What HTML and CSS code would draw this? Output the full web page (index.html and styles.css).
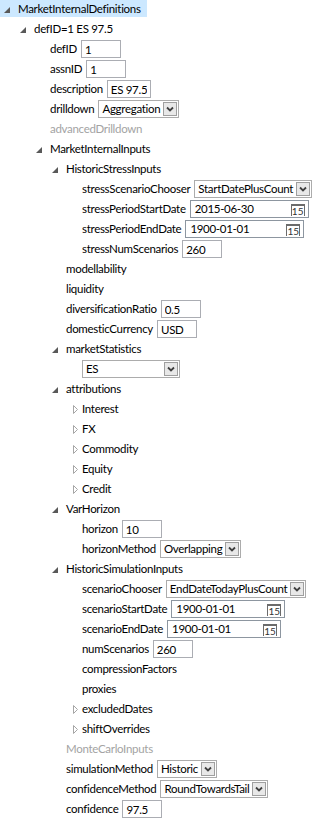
FILE: index.html
```html
<!DOCTYPE html>
<html lang="en">
<head>
    <meta charset="UTF-8">
    <title>MarketInternalDefinitions</title>
    <link rel="stylesheet" href="styles.css">
</head>
<body>
    <ul class="tree">
        <li>
            <div class="row selected">
                <span class="exp open"></span>
                <span class="label">MarketInternalDefinitions</span>
            </div>
            <ul>
                <li>
                    <div class="row"><span class="exp open"></span><span class="label">defID=1 ES 97.5</span></div>
                    <ul>
                        <li><div class="row"><span class="exp"></span><span class="label">defID</span><input class="field" type="text" value="1"></div></li>
                        <li><div class="row"><span class="exp"></span><span class="label">assnID</span><input class="field" type="text" value="1"></div></li>
                        <li><div class="row"><span class="exp"></span><span class="label">description</span><input class="field wide" type="text" value="ES 97.5"></div></li>
                        <li><div class="row"><span class="exp"></span><span class="label">drilldown</span><span class="combo"><span class="combo-text">Aggregation</span><span class="combo-btn"></span></span></div></li>
                        <li><div class="row"><span class="exp"></span><span class="label muted">advancedDrilldown</span></div></li>
                        <li>
                            <div class="row"><span class="exp open"></span><span class="label">MarketInternalInputs</span></div>
                            <ul>
                                <li>
                                    <div class="row"><span class="exp open"></span><span class="label">HistoricStressInputs</span></div>
                                    <ul>
                                        <li><div class="row"><span class="exp"></span><span class="label">stressScenarioChooser</span><span class="combo"><span class="combo-text">StartDatePlusCount</span><span class="combo-btn"></span></span></div></li>
                                        <li><div class="row"><span class="exp"></span><span class="label">stressPeriodStartDate</span><span class="date"><span class="date-text">2015-06-30</span><span class="cal">15</span></span></div></li>
                                        <li><div class="row"><span class="exp"></span><span class="label">stressPeriodEndDate</span><span class="date"><span class="date-text">1900-01-01</span><span class="cal">15</span></span></div></li>
                                        <li><div class="row"><span class="exp"></span><span class="label">stressNumScenarios</span><input class="field" type="text" value="260"></div></li>
                                    </ul>
                                </li>
                                <li><div class="row"><span class="exp"></span><span class="label">modellability</span></div></li>
                                <li><div class="row"><span class="exp"></span><span class="label">liquidity</span></div></li>
                                <li><div class="row"><span class="exp"></span><span class="label">diversificationRatio</span><input class="field" type="text" value="0.5"></div></li>
                                <li><div class="row"><span class="exp"></span><span class="label">domesticCurrency</span><input class="field" type="text" value="USD"></div></li>
                                <li>
                                    <div class="row"><span class="exp open"></span><span class="label">marketStatistics</span></div>
                                    <ul>
                                        <li><div class="row"><span class="exp"></span><span class="combo fixed"><span class="combo-text">ES</span><span class="combo-btn"></span></span></div></li>
                                    </ul>
                                </li>
                                <li>
                                    <div class="row"><span class="exp open"></span><span class="label">attributions</span></div>
                                    <ul>
                                        <li><div class="row"><span class="exp closed"></span><span class="label">Interest</span></div></li>
                                        <li><div class="row"><span class="exp closed"></span><span class="label">FX</span></div></li>
                                        <li><div class="row"><span class="exp closed"></span><span class="label">Commodity</span></div></li>
                                        <li><div class="row"><span class="exp closed"></span><span class="label">Equity</span></div></li>
                                        <li><div class="row"><span class="exp closed"></span><span class="label">Credit</span></div></li>
                                    </ul>
                                </li>
                                <li>
                                    <div class="row"><span class="exp open"></span><span class="label">VarHorizon</span></div>
                                    <ul>
                                        <li><div class="row"><span class="exp"></span><span class="label">horizon</span><input class="field" type="text" value="10"></div></li>
                                        <li><div class="row"><span class="exp"></span><span class="label">horizonMethod</span><span class="combo"><span class="combo-text">Overlapping</span><span class="combo-btn"></span></span></div></li>
                                    </ul>
                                </li>
                                <li>
                                    <div class="row"><span class="exp open"></span><span class="label">HistoricSimulationInputs</span></div>
                                    <ul>
                                        <li><div class="row"><span class="exp"></span><span class="label">scenarioChooser</span><span class="combo"><span class="combo-text">EndDateTodayPlusCount</span><span class="combo-btn"></span></span></div></li>
                                        <li><div class="row"><span class="exp"></span><span class="label">scenarioStartDate</span><span class="date short"><span class="date-text">1900-01-01</span><span class="cal">15</span></span></div></li>
                                        <li><div class="row"><span class="exp"></span><span class="label">scenarioEndDate</span><span class="date short"><span class="date-text">1900-01-01</span><span class="cal">15</span></span></div></li>
                                        <li><div class="row"><span class="exp"></span><span class="label">numScenarios</span><input class="field" type="text" value="260"></div></li>
                                        <li><div class="row"><span class="exp"></span><span class="label">compressionFactors</span></div></li>
                                        <li><div class="row"><span class="exp"></span><span class="label">proxies</span></div></li>
                                        <li><div class="row"><span class="exp closed"></span><span class="label">excludedDates</span></div></li>
                                        <li><div class="row"><span class="exp closed"></span><span class="label">shiftOverrides</span></div></li>
                                    </ul>
                                </li>
                                <li><div class="row"><span class="exp"></span><span class="label muted">MonteCarloInputs</span></div></li>
                                <li><div class="row"><span class="exp"></span><span class="label">simulationMethod</span><span class="combo"><span class="combo-text">Historic</span><span class="combo-btn"></span></span></div></li>
                                <li><div class="row"><span class="exp"></span><span class="label">confidenceMethod</span><span class="combo"><span class="combo-text">RoundTowardsTail</span><span class="combo-btn"></span></span></div></li>
                                <li><div class="row"><span class="exp"></span><span class="label">confidence</span><input class="field" type="text" value="97.5"></div></li>
                            </ul>
                        </li>
                    </ul>
                </li>
            </ul>
        </li>
    </ul>
</body>
</html>
```

FILE: styles.css
```css
body {
    margin: 0;
    background-color: white;
    font-family: "Lato", "Noto Sans", sans-serif;
    font-size: 11.5px;
    letter-spacing: -0.3px;
    color: #000;
}

.tree,
.tree ul {
    list-style: none;
    margin: 0;
    padding: 0;
}

.tree ul {
    padding-left: 16px;
}

.row {
    display: flex;
    align-items: center;
    height: 18px;
    margin-bottom: 2px;
    white-space: nowrap;
}

.selected {
    width: 147px;
    height: 17px;
    margin-bottom: 3px;
    background-color: #cce8ff;
}

.exp {
    flex: none;
    width: 18px;
    height: 16px;
    background-repeat: no-repeat;
}

.exp.open {
    background-image: url("data:image/svg+xml,%3Csvg xmlns='http://www.w3.org/2000/svg' width='18' height='16'%3E%3Cpolygon points='10,6 10,12 4,12' fill='%23595959'/%3E%3C/svg%3E");
}

.exp.closed {
    background-image: url("data:image/svg+xml,%3Csvg xmlns='http://www.w3.org/2000/svg' width='18' height='16'%3E%3Cpolygon points='9.5,4.5 13.5,8.5 9.5,12.5' fill='white' stroke='%23a6a6a6'/%3E%3C/svg%3E");
}

.label {
    line-height: 16px;
    margin-right: 4px;
}

.muted {
    color: #a3a3a3;
}

.field {
    box-sizing: border-box;
    width: 40px;
    height: 18px;
    margin: 0;
    padding: 0 3px;
    border: 1px solid #abadb3;
    font: inherit;
    letter-spacing: inherit;
    color: #000;
    outline: none;
}

.field.wide {
    width: 44px;
}

.combo {
    box-sizing: border-box;
    display: flex;
    align-items: center;
    height: 18px;
    padding: 0 1px 0 3px;
    border: 1px solid #acacac;
    background-color: white;
}

.combo.fixed {
    width: 98px;
    justify-content: space-between;
}

.combo-text {
    line-height: 16px;
    margin-right: 3px;
}

.combo-btn {
    box-sizing: border-box;
    width: 14px;
    height: 14px;
    border: 1px solid #9f9f9f;
    background: #e8e8e8 url("data:image/svg+xml,%3Csvg xmlns='http://www.w3.org/2000/svg' width='12' height='12'%3E%3Cpath d='M3,4.5 L6,7.5 L9,4.5' fill='none' stroke='%23404040' stroke-width='1.8'/%3E%3C/svg%3E") no-repeat center;
}

.date {
    box-sizing: border-box;
    display: flex;
    align-items: flex-end;
    justify-content: space-between;
    width: 119px;
    height: 18px;
    padding: 0 3px 1px 4px;
    border: 1px solid #8d96a0;
    background-color: white;
}

.date.short {
    width: 114px;
}

.date-text {
    line-height: 15px;
    align-self: center;
}

.cal {
    box-sizing: border-box;
    width: 14px;
    height: 12px;
    border: 1px solid #6b6b6b;
    border-top-width: 2px;
    border-bottom: none;
    font-size: 10px;
    letter-spacing: 0;
    line-height: 10px;
    text-align: center;
    color: #333;
}
```
